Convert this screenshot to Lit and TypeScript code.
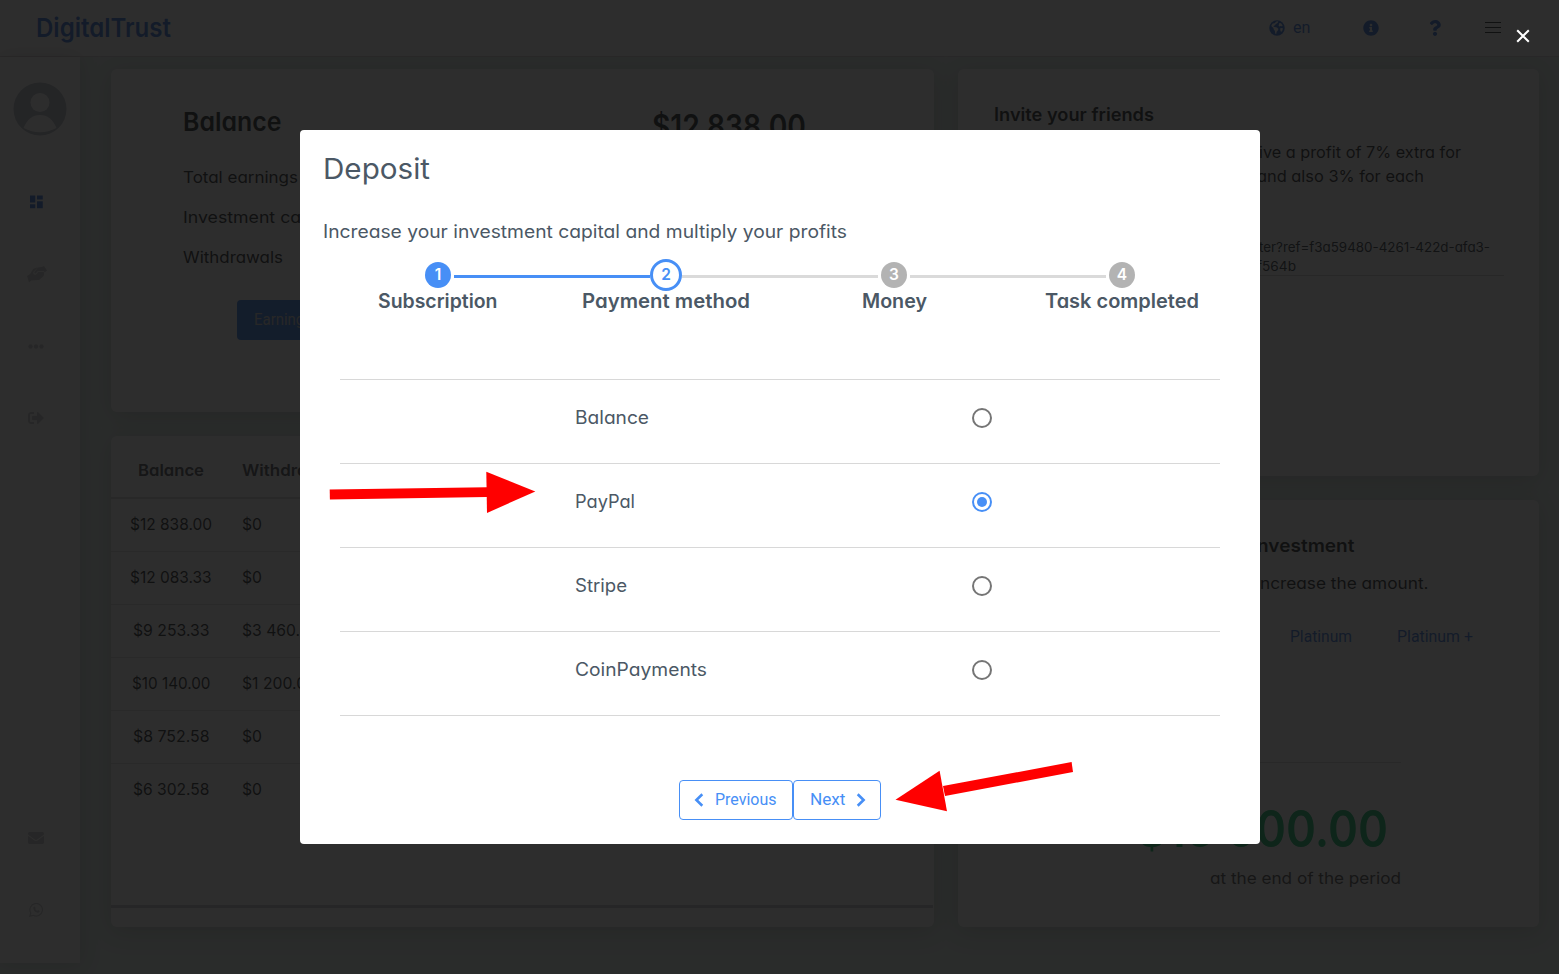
import { LitElement, html, css, svg, nothing } from "lit";
import { customElement, property, state } from "lit/decorators.js";
import { classMap } from "lit/directives/class-map.js";
import { styleMap } from "lit/directives/style-map.js";

/** A single-line label whose glyphs are widened or narrowed so the text spans `w` pixels. */
@customElement("fit-label")
class FitLabel extends LitElement {
  @property({ type: Number }) w = 0;
  @property() text = "";
  @state() private stretch = 1;
  static styles = css`
    :host { display: block; white-space: pre; flex: none; }
    .glyphs { display: inline-block; transform-origin: 0 50%; }
  `;
  firstUpdated() {
    const natural = this.renderRoot.querySelector("span")!.getBoundingClientRect().width;
    if (this.w && natural) this.stretch = this.w / natural;
  }
  render() {
    return html`<div style=${styleMap({ width: `${this.w}px` })}><span class="glyphs" style=${styleMap({ transform: `scaleX(${this.stretch})` })}>${this.text}</span></div>`;
  }
}

const fit = (text: string, w: number) => html`<fit-label .text=${text} .w=${w}></fit-label>`;

const fa = (w: number, d: string, width: number, height = 16) => html`
  <svg width=${width} height=${height} viewBox="0 0 ${w} 512" fill="currentColor"><path d=${d}></path></svg>`;

const INFO = "M256 8C119.043 8 8 119.083 8 256c0 136.997 111.043 248 248 248s248-111.003 248-248C504 119.083 392.957 8 256 8zm0 110c23.196 0 42 18.804 42 42s-18.804 42-42 42-42-18.804-42-42 18.804-42 42-42zm56 254c0 6.627-5.373 12-12 12h-88c-6.627 0-12-5.373-12-12v-24c0-6.627 5.373-12 12-12h12v-64h-12c-6.627 0-12-5.373-12-12v-24c0-6.627 5.373-12 12-12h64c6.627 0 12 5.373 12 12v100h12c6.627 0 12 5.373 12 12v24z";
const HELP = "M202.021 0C122.202 0 70.503 32.703 29.914 91.026c-7.363 10.58-5.093 25.086 5.178 32.874l43.138 32.709c10.373 7.865 25.132 6.026 33.253-4.148 25.049-31.381 43.63-49.449 82.757-49.449 30.764 0 68.816 19.799 68.816 49.631 0 22.552-18.617 34.134-48.993 51.164-35.423 19.86-82.299 44.576-82.299 106.405V320c0 13.255 10.745 24 24 24h72.471c13.255 0 24-10.745 24-24v-5.773c0-42.86 125.268-44.645 125.268-160.627C377.504 66.256 286.902 0 202.021 0zM192 373.459c-38.196 0-69.271 31.075-69.271 69.271 0 38.195 31.075 69.27 69.271 69.27s69.271-31.075 69.271-69.271-31.075-69.27-69.271-69.27z";
const MAIL = "M502.3 190.8c3.9-3.1 9.7-.2 9.7 4.7V400c0 26.5-21.5 48-48 48H48c-26.5 0-48-21.5-48-48V195.6c0-5 5.7-7.8 9.7-4.7 22.4 17.4 52.1 39.5 154.1 113.6 21.1 15.4 56.7 47.8 92.2 47.6 35.7.3 72-32.8 92.3-47.6 102-74.1 131.6-96.3 154-113.7zM256 320c23.2.4 56.6-29.2 73.4-41.4 132.7-96.3 142.8-104.7 173.4-128.7 5.8-4.5 9.2-11.5 9.2-18.9v-19c0-26.5-21.5-48-48-48H48c-26.5 0-48 21.5-48 48v19c0 7.4 3.4 14.3 9.2 18.9 30.6 23.9 40.7 32.4 173.4 128.7 16.8 12.2 50.2 41.8 73.4 41.4z";
const EXIT = "M497 273L329 441c-15 15-41 4.5-41-17v-96H152c-13.3 0-24-10.7-24-24v-96c0-13.3 10.7-24 24-24h136V88c0-21.4 25.9-32 41-17l168 168c9.3 9.4 9.3 24.6 0 34zM192 436v-40c0-6.6-5.4-12-12-12H96c-17.7 0-32-14.3-32-32V160c0-17.7 14.3-32 32-32h84c6.6 0 12-5.4 12-12V76c0-6.6-5.4-12-12-12H96c-53 0-96 43-96 96v192c0 53 43 96 96 96h84c6.6 0 12-5.4 12-12z";

const globe = html`<svg width="16" height="16" viewBox="0 0 16 16">
  <circle cx="8" cy="8" r="7.75" fill="currentColor"></circle>
  <path class="land" d="M7.4 1.6 9.3 1.300 8.600 3 6.900 3.900 5.900 5.300 4.200 6.200 5.400 7.100 8 7.600 9.400 9 8.800 10.600 7.600 11.700 7.300 13.700 6.300 13.800 5.900 11 4.700 9.300 4.300 7.800 2.600 6.600 2.400 5.200 3.800 3.600 5.600 3.200zM10.400 3 12 3.200 13.600 5.400 13 6.300 11.400 5.900 10.200 6.600 9.600 5.500zM11.500 8 13.900 8.200 13.400 10.500 12.100 11.900 11.200 10z"></path>
</svg>`;

const METHODS: [string, number][] = [["Balance", 74], ["PayPal", 60], ["Stripe", 52], ["CoinPayments", 132]];
const STEPS: [string, number][] = [["Subscription", 119.5], ["Payment method", 168], ["Money", 65], ["Task completed", 154]];
const ROWS: [string, number, string, number][] = [
  ["$12 838.00", 82, "$0", 20],
  ["$12 083.33", 81.5, "$0", 20],
  ["$9 253.33", 76.5, "$3 460.33", 77],
  ["$10 140.00", 78.5, "$1 200.00", 74],
  ["$8 752.58", 76.5, "$0", 20],
  ["$6 302.58", 76.5, "$0", 20],
];

@customElement("app-root")
class AppRoot extends LitElement {
  @state() private method = 1;
  private current = 1;

  static styles = css`
    * { box-sizing: border-box; }
    :host {
      display: block; position: relative; width: 1559px; height: 974px; overflow: hidden;
      font-family: Inter, "Open Sans", sans-serif; font-feature-settings: "cv11"; font-size: 16px;
      color: #16181b; background: #e2f0ea;
    }
    svg { display: block; flex: none; }
    .roboto { font-family: Roboto, sans-serif; }
    .header {
      height: 57px; background: #fff; border-bottom: 1px solid #d8d0d3; display: flex; align-items: center;
      padding: 0 58px 1px 36px; color: #2f6fdc;
    }
    .brand { font-size: 26px; font-weight: 600; line-height: 32px; margin-right: auto; }
    .lang { display: flex; gap: 8px; align-items: center; margin-right: 53px; }
    .land { fill: #fff; }
    .help { margin: 0 44px 0 50px; }
    .burger { width: 16px; height: 11px; display: flex; flex-direction: column; justify-content: space-between; }
    .burger i { height: 1px; background: #16181b; }
    .body { display: flex; height: 917px; }
    .side {
      width: 80px; height: 906px; background: #fff; box-shadow: 0 0 20px rgba(60,40,45,.2); display: flex;
      flex-direction: column; align-items: center; padding-top: 25px; color: #c6c6ca; flex: none;
    }
    .side .nav { height: 72px; width: 72px; display: flex; align-items: center; justify-content: center; }
    .side .nav.first { margin-top: 30px; color: #2f6fdc; padding-right: 1px; }
    .side .nav.low { margin-top: 348px; }
    .main { display: grid; grid-template-columns: 823px 581px; column-gap: 24px; padding: 12px 0 0 31px; align-items: start; }
    .col { display: flex; flex-direction: column; gap: 24px; }
    .card { background: #fff; border-radius: 6px; box-shadow: 0 4px 24px rgba(60,40,45,.22); overflow: hidden; }
    .summary { height: 343px; padding: 37px 71.5px; display: flex; }
    .facts { width: 469.5px; }
    h2 { margin: 0; font-size: 26px; font-weight: 600; line-height: 32px; height: 52px; }
    .fact { height: 40px; line-height: 39px; }
    .earn { margin: 22px 0 0 54.500px; width: 110px; height: 40px; border-radius: 4px; background: #2f78e8; color: #ccc; line-height: 39px; padding-left: 16.5px; }
    .total { font-size: 32px; font-weight: 600; line-height: 41px; }
    .table { height: 491px; display: flex; flex-direction: column; }
    .tr { display: grid; grid-template-columns: 120px 1fr; height: 53px; align-items: center; justify-items: start; padding-bottom: 2px; }
    .tr + .tr { border-top: 1px solid #dcdcdc; }
    .tr > :first-child { justify-self: center; }
    .tr > :last-child { margin-left: 10.5px; }
    .tr.th { height: 63px; font-weight: 600; color: #40444a; border-bottom: 2px solid #d0d0d0; padding: 7px 0 0; }
    .tr.th + .tr { border-top: 0; height: 52px; }
    .foot { margin: auto 1px 19px 0; height: 3px; background: #c4c4c8; }
    .invite { height: 407px; padding: 34px 36px 0; }
    .invite h3, .plan h3 { margin: 0; font-size: 18px; font-weight: 600; line-height: 24px; height: 37px; display: flex; }
    .line { display: flex; line-height: 25px; height: 24px; }
    .link { font-size: 13px; line-height: 19px; display: flex; color: #222c34; width: 496px; justify-content: space-between; }
    .link.tail { width: 302px; }
    .linkbox { margin-top: 49px; border-bottom: 1px solid #ccc; width: 510px; height: 39px; padding-top: 1px; }
    .plan { height: 427px; padding: 34px 36px 0; }
    .tabs { display: flex; gap: 45px; padding-left: 295.5px; margin-top: 30px; line-height: 24px; color: #2f6fdc; }
    .rule { width: 407px; height: 1px; background: #d0d0d0; margin-top: 113px; }
    .amount { font-size: 51px; font-weight: 600; color: #00b862; line-height: 60px; margin: 36px 0 0 143px; }
    .period { margin: 7px 0 0 216px; line-height: 24px; color: #454545; }

    .backdrop { position: absolute; inset: 0; background: rgba(16,16,16,.88); }
    .close { position: absolute; left: 1516px; top: 29px; color: #fff; }
    .modal {
      position: absolute; left: 300px; top: 130px; width: 960px; height: 714px; background: #fff; border-radius: 4px;
      color: #4b5865; padding: 23px 24px 24px; display: flex; flex-direction: column;
    }
    .title { font-size: 28px; line-height: 32px; margin-left: -1.5px; }
    .sub { font-size: 18px; line-height: 26px; margin: 34px 0 0 -1px; }
    .steps { display: grid; grid-template-columns: repeat(4, 228px); margin-top: 14px; height: 60px; }
    .step { display: flex; flex-direction: column; align-items: center; }
    .track { width: 228px; height: 32px; display: flex; align-items: center; }
    .bar { flex: 1; height: 3px; margin-top: 3px; background: #dadada; }
    .bar.on { background: #478ff6; }
    .bar.none { background: none; }
    .dot {
      width: 26px; height: 26px; border-radius: 50%; background: #b3b3b3; color: #fff; font-weight: 600; font-size: 15.5px;
      display: flex; align-items: center; justify-content: center; margin: 0 3px; flex: none; padding-bottom: 1px;
    }
    .dot.done { background: #478ff6; }
    .dot.active { width: 32px; height: 32px; margin: 0; background: #fff; border: 3px solid #478ff6; color: #478ff6; }
    .caption { font-size: 19.5px; font-weight: 600; line-height: 20px; }
    .methods { margin: 60px 16px 0; border-top: 1px solid #d8d8d8; }
    .method {
      height: 84px; border-bottom: 1px solid #d8d8d8; display: grid; grid-template-columns: 397px 20px; align-items: center;
      padding: 0 0 7px 235px; font-size: 18px; line-height: 22px;
    }
    .radio { width: 20px; height: 20px; border-radius: 50%; border: 2px solid #757575; padding: 3px; }
    .radio.on { border-color: #478ff6; }
    .radio.on i { display: block; width: 10px; height: 10px; border-radius: 50%; background: #478ff6; }
    .buttons { margin-top: auto; display: flex; justify-content: center; color: #478ff6; }
    .btn {
      height: 40px; border: 1px solid #478ff6; border-radius: 4px; background: #fff; display: flex; align-items: center;
      line-height: 38px; padding: 0 0 0 13.5px; gap: 11px; width: 114px;
    }
    .btn.next { width: 88px; padding: 0 0 0 16px; gap: 10px; }
    .marks { position: absolute; left: 0; top: 0; pointer-events: none; }
  `;

  private dashboard() {
    return html`
      <div class="header">
        <div class="brand">${fit("DigitalTrust", 135)}</div>
        <div class="lang roboto">${globe}${fit("en", 17.5)}</div>
        ${fa(512, INFO, 16)}
        <div class="help">${fa(384, HELP, 12)}</div>
        <div class="burger"><i></i><i></i><i></i></div>
      </div>
      <div class="body">
        <div class="side">
          <svg width="54" height="54" viewBox="0 0 54 54">
            <circle cx="27" cy="27" r="26.5" fill="#b4b9c3"></circle>
            <circle cx="27" cy="20.5" r="9.5" fill="#fff"></circle>
            <path d="M10.500 46Q16 33 27 33t16.500 13Q27 54.500 10.500 46z" fill="#fff"></path>
          </svg>
          <div class="nav first"><svg width="21" height="14" viewBox="0 0 21 14" fill="currentColor"><path d="M1 .5h5.3v7H1zM8 .5h5.8v4H8zM1 9.3h5.3v4H1zM8 6.2h5.8v7.1H8z"></path></svg></div>
          <div class="nav"><svg width="27" height="17" viewBox="0 0 27 17" fill="currentColor">
            <path d="M0 10 3 8 6.3 2.8 10 1.5h.8L6.4 6q-.6 3 2.6 2.6l2.4-2.9h5.3q1.2 3.4-1 5.4l-3.7 2.8-7.7.5L2 16.4zM11 1.6 14.6 1 17 .1l3.1 4.5-2.6 2-.5-1.7h-6l-2.4 2.7Q7 8 7.4 6z"></path></svg></div>
          <div class="nav"><svg width="24" height="6" viewBox="0 0 24 6" fill="currentColor"><circle cx="2.5" cy="3.500" r="2.2"></circle><circle cx="8" cy="3.500" r="2.2"></circle><circle cx="13.5" cy="3.500" r="2.2"></circle></svg></div>
          <div class="nav"><svg width="24" height="16" viewBox="0 0 768 512" fill="currentColor"><path d=${EXIT}></path></svg></div>
          <div class="nav low"><svg width="24" height="16" viewBox="0 0 768 512" fill="currentColor"><path d=${MAIL}></path></svg></div>
          <div class="nav"><svg width="22" height="14" viewBox="0 0 22 14" fill="none" stroke="currentColor">
            <path d="M.8 13.2 1.8 10A6.3 6.3 0 1 1 4.2 12.3z" stroke-width="1.2"></path>
            <path d="M4.3 4.2q1.5-1.4 2 .1l.3 1q-.6.7.1 1.4.8 1 1.7 1l.8-.6 1.7.9q-.3 2-2.4 1.7Q4 8.700 4.300 4.200z" fill="currentColor" stroke="none"></path></svg></div>
        </div>
        <div class="main">
          <div class="col">
            <div class="card summary">
              <div class="facts">
                <h2>${fit("Balance", 98.5)}</h2>
                <div class="fact">${fit("Total earnings", 115)}</div>
                <div class="fact">${fit("Investment capital", 154)}</div>
                <div class="fact">${fit("Withdrawals", 100)}</div>
                <div class="earn roboto">${fit("Earnings", 58)}</div>
              </div>
              <div class="total">${fit("$12 838.00", 154)}</div>
            </div>
            <div class="card table">
              <div class="tr th">${fit("Balance", 66)}${fit("Withdrawals", 104)}</div>
              ${ROWS.map(([a, aw, b, bw]) => html`<div class="tr">${fit(a, aw)}${fit(b, bw)}</div>`)}
              <div class="foot"></div>
            </div>
          </div>
          <div class="col">
            <div class="card invite">
              <h3>${fit("Invite your friends", 160)}</h3>
              <div class="line">${fit("Invite your friends and rece", 265)}${fit("ive a profit of 7% extra for", 202)}</div>
              <div class="line">${fit("each person who registers ", 263)}${fit("and also 3% for each", 167)}</div>
              <div class="linkbox">
                <div class="link">${fit("https://digitaltrust.com/auth/regis", 264)}${fit("ter?ref=f3a59480-4261-422d-afa3-", 231)}</div>
                <div class="link tail">${fit("b7c18e3", 60)}${fit("f564b", 39)}</div>
              </div>
            </div>
            <div class="card plan">
              <h3>${fit("Simulate your i", 263)}${fit("nvestment", 97.5)}</h3>
              <div class="line">${fit("Choose a plan and i", 266)}${fit("ncrease the amount.", 168.5)}</div>
              <div class="tabs roboto">${fit("Platinum", 62)}${fit("Platinum +", 76)}</div>
              <div class="rule"></div>
              <div class="amount">${fit("$15 000.00", 251)}</div>
              <div class="period">${fit("at the end of the period", 191)}</div>
            </div>
          </div>
        </div>
      </div>`;
  }

  private step(label: string, w: number, i: number) {
    const last = STEPS.length - 1;
    return html`<div class="step">
      <div class="track">
        <div class=${classMap({ bar: true, on: i <= this.current, none: i === 0 })}></div>
        <div class=${classMap({ dot: true, done: i < this.current, active: i === this.current })}>${i + 1}</div>
        <div class=${classMap({ bar: true, on: i < this.current, none: i === last })}></div>
      </div>
      <div class="caption">${fit(label, w)}</div>
    </div>`;
  }

  render() {
    return html`
      ${this.dashboard()}
      <div class="backdrop"></div>
      <svg class="close" width="14" height="14" viewBox="0 0 14 14" stroke="currentColor" stroke-width="2"><path d="M1.200 1.200 12.800 12.800M12.800 1.200 1.200 12.800"></path></svg>
      <div class="modal">
        <div class="title">${fit("Deposit", 107)}</div>
        <div class="sub">${fit("Increase your investment capital and multiply your profits", 524)}</div>
        <div class="steps">${STEPS.map(([l, w], i) => this.step(l, w, i))}</div>
        <div class="methods">
          ${METHODS.map(([l, w], i) => html`<div class="method" @click=${() => (this.method = i)}>
            ${fit(l, w)}
            <div class=${classMap({ radio: true, on: i === this.method })}>${i === this.method ? html`<i></i>` : nothing}</div>
          </div>`)}
        </div>
        <div class="buttons roboto">
          <div class="btn">
            <svg width="10" height="14" viewBox="0 0 10 14" fill="none" stroke="currentColor" stroke-width="2.600"><path d="M8.300 1.300 2.400 7 8.300 12.700"></path></svg>
            ${fit("Previous", 61.5)}
          </div>
          <div class="btn next">
            ${fit("Next", 35.5)}
            <svg width="10" height="14" viewBox="0 0 10 14" fill="none" stroke="currentColor" stroke-width="2.600"><path d="M1.700 1.300 7.600 7 1.700 12.700"></path></svg>
          </div>
        </div>
      </div>
      <svg class="marks" width="1559" height="974" viewBox="0 0 1559 974" fill="#f00">
        ${svg`<path d="M329.700 489.600 487 487.200V497L329.900 499.500z"></path><path d="M486.300 471.700 535.300 491.400 487 513z"></path>
        <path d="M1071.600 762 943 786l2 10 128-24z"></path><path d="M939.600 770.700 947 811.200 895.500 799.700z"></path>`}
      </svg>`;
  }
}
